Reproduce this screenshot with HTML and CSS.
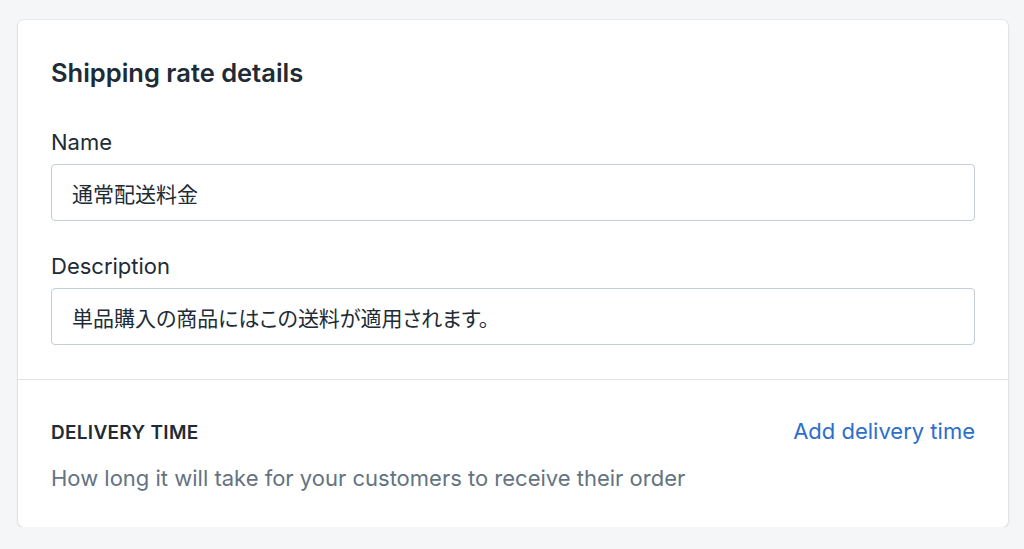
FILE: index.html
```html
<!DOCTYPE html>
<html>
<head>
  <title>Shipping rate details</title>
  <link rel="stylesheet" href="styles.css">
</head>
<body>
<div class="card">
  <div class="card-section">
    <h2 class="card-title">Shipping rate details</h2>
    <div class="field">
      <label for="rateName">Name</label>
      <input type="text" id="rateName" value="通常配送料金">
    </div>
    <div class="field">
      <label for="rateDesc">Description</label>
      <input type="text" id="rateDesc" value="単品購入の商品にはこの送料が適用されます。">
    </div>
  </div>
  <div class="card-section">
    <div class="section-head">
      <h3 class="subheading">Delivery time</h3>
      <a class="link" href="#">Add delivery time</a>
    </div>
    <p class="subdued">How long it will take for your customers to receive their order</p>
  </div>
</div>
</body>
</html>
```

FILE: styles.css
```css
body {
  margin: 0;
  background: #f4f6f8;
  font-family: Inter, "Noto Sans CJK JP", sans-serif;
  color: #212b36;
}

.card {
  margin: 20px 16px 0 18px;
  background: #fff;
  border-radius: 6px;
  box-shadow: 0 0 0 1px rgba(63, 63, 68, 0.05), 0 1px 3px 0 rgba(63, 63, 68, 0.15);
}

.card-section {
  padding: 39px 33px 34px;
}

.card-section + .card-section {
  border-top: 1px solid #dfe3e8;
  padding-top: 38px;
  padding-bottom: 35px;
}

.card-title {
  margin: 0;
  font-size: 25.5px;
  line-height: 28px;
  font-weight: 600;
}

.field {
  margin-top: 42px;
}

.field + .field {
  margin-top: 32px;
}

.field label {
  display: block;
  font-size: 22px;
  line-height: 26px;
  margin-bottom: 9px;
}

.field input {
  display: block;
  box-sizing: border-box;
  width: 100%;
  height: 57px;
  padding: 0 20px;
  border: 1px solid #c4cdd5;
  border-radius: 4px;
  font-family: Inter, "Noto Sans CJK JP", sans-serif;
  font-size: 21px;
  font-feature-settings: "palt";
  color: #212b36;
  background: #fff;
}

.section-head {
  display: flex;
  justify-content: space-between;
  align-items: baseline;
}

.subheading {
  margin: 0;
  font-size: 19px;
  line-height: 24px;
  font-weight: 600;
  text-transform: uppercase;
  letter-spacing: 0.3px;
}

.link {
  font-size: 22px;
  color: #2c6ecb;
  text-decoration: none;
}

.subdued {
  margin: 19px 0 0;
  font-size: 22px;
  line-height: 28px;
  color: #637381;
}
```
